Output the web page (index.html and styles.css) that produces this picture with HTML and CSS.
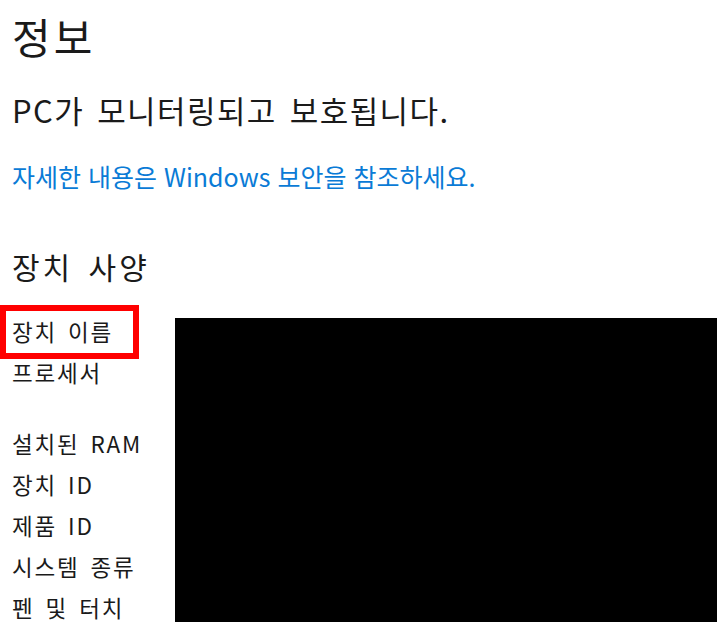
FILE: index.html
```html
<!DOCTYPE html>
<html lang="ko">
<head>
<meta charset="utf-8">
<title>정보</title>
<link rel="stylesheet" href="styles.css">
</head>
<body>
<main class="page">
  <h1 class="title">정보</h1>
  <p class="status">PC가 모니터링되고 보호됩니다.</p>
  <a class="link" href="#">자세한 내용은 Windows 보안을 참조하세요.</a>
  <h2 class="section">장치 사양</h2>
  <div class="specs">
    <ul class="labels">
      <li class="label highlighted">장치 이름</li>
      <li class="label double">프로세서</li>
      <li class="label">설치된 RAM</li>
      <li class="label">장치 ID</li>
      <li class="label">제품 ID</li>
      <li class="label">시스템 종류</li>
      <li class="label">펜 및 터치</li>
    </ul>
    <div class="redacted"></div>
  </div>
</main>
</body>
</html>
```
FILE: styles.css
```css
*, *::before, *::after { box-sizing: border-box; }
html, body {
  margin: 0;
  padding: 0;
  background: #ffffff;
}
body {
  font-family: "Noto Sans CJK KR", "Noto Sans", sans-serif;
  color: #1a1a1a;
  overflow: hidden;
}
.page {
  display: flex;
  flex-direction: column;
  align-items: flex-start;
  padding-left: 12px;
  width: 717px;
}
.title {
  margin: 8px 0 0;
  font-size: 42px;
  font-weight: 400;
  line-height: 56px;
  letter-spacing: 3px;
  color: #1a1a1a;
}
.status {
  margin: 26px 0 0;
  font-size: 31px;
  font-weight: 400;
  line-height: 40px;
  letter-spacing: 1.4px;
  word-spacing: 3px;
  color: #1a1a1a;
}
.link {
  margin-top: 29px;
  font-size: 25px;
  line-height: 34px;
  color: #0a7bd6;
  text-decoration: none;
}
.section {
  margin: 53px 0 0;
  font-size: 30px;
  font-weight: 400;
  line-height: 40px;
  letter-spacing: 3px;
  word-spacing: 4px;
  color: #1a1a1a;
}
.specs {
  margin-top: 30px;
  display: flex;
  align-items: flex-start;
  width: 705px;
}
.labels {
  list-style: none;
  margin: 0;
  padding: 0;
  width: 163px;
  display: flex;
  flex-direction: column;
  gap: 11px;
}
.label {
  font-size: 22.5px;
  line-height: 30px;
  letter-spacing: 1.8px;
  word-spacing: 3px;
  color: #1a1a1a;
  white-space: nowrap;
}
.label.double { height: 60px; }
.highlighted {
  position: relative;
}
.highlighted::after {
  content: "";
  position: absolute;
  left: -12px;
  top: -11px;
  width: 139px;
  height: 54px;
  border: 6px solid #ff0000;
}
.redacted {
  flex: 1;
  margin-top: 2px;
  height: 304px;
  background: #000;
}
```
